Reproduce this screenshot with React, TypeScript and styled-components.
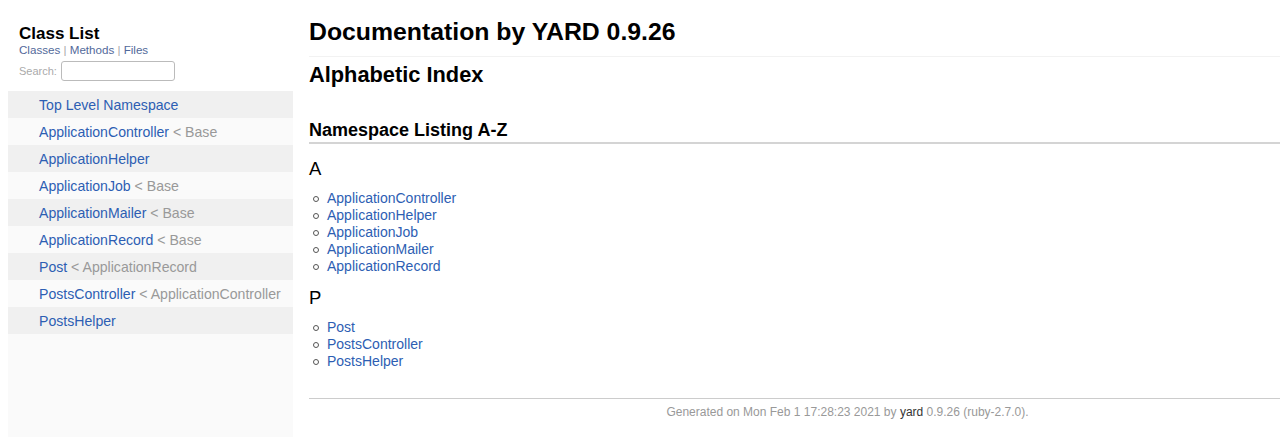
import styled, { createGlobalStyle } from "styled-components";

const Global = createGlobalStyle`
    html, body {
        margin: 0;
        padding: 0;
        background: #fff;
        font-family: "Liberation Sans", Arial, sans-serif;
        overflow: hidden;
    }
`;

const Page = styled.div`
    display: flex;
    height: 437px;
    padding-left: 8px;
`;

const Sidebar = styled.nav`
    width: 285px;
    flex-shrink: 0;
    background: #fafafa;
    display: flex;
    flex-direction: column;
`;

const SideHeader = styled.div`
    background: #fff;
    height: 91px;
    padding: 25px 0 0 11px;
    box-sizing: border-box;
`;

const SideTitle = styled.h1`
    margin: 0;
    font-size: 17px;
    font-weight: bold;
    color: #000;
    line-height: 18px;
`;

const SideNav = styled.div`
    font-size: 11.6px;
    color: #aaa;
    line-height: 13px;
    a {
        color: #52699a;
        text-decoration: none;
    }
`;

const SearchRow = styled.label`
    display: flex;
    align-items: center;
    gap: 4px;
    margin-top: 5px;
    font-size: 11px;
    color: #aaa;
`;

const SearchInput = styled.input`
    width: 114px;
    height: 20px;
    box-sizing: border-box;
    border: 1px solid #bbb;
    border-radius: 3px;
    background: #fff;
    outline: none;
`;

const ClassList = styled.ul`
    list-style: none;
    margin: 0;
    padding: 0;
`;

const ClassRow = styled.li<{ $odd: boolean }>`
    height: 27px;
    display: flex;
    align-items: center;
    padding-left: 31px;
    font-size: 14.1px;
    background: ${(p) => (p.$odd ? "#f0f0f0" : "#fafafa")};
    color: #999;
    white-space: nowrap;
`;

const Link = styled.a`
    color: #2d5eb3;
    text-decoration: none;
`;

const Main = styled.main`
    flex: 1;
    padding: 17px 0 0 16px;
    min-width: 0;
`;

const Title = styled.h1`
    margin: 0;
    font-size: 24.8px;
    line-height: 29px;
    font-weight: bold;
    color: #000;
    padding-bottom: 10px;
    border-bottom: 1px solid #f2f2f2;
`;

const SubTitle = styled.h2`
    margin: 5px 0 0;
    font-size: 21.8px;
    line-height: 26px;
    font-weight: bold;
    color: #000;
`;

const SectionTitle = styled.h2`
    margin: 32px 0 13px;
    font-size: 18px;
    line-height: 20px;
    font-weight: bold;
    color: #000;
    padding-bottom: 2px;
    border-bottom: 2px solid #d4d4d4;
`;

const Letter = styled.h3`
    margin: 11px 0 0;
    font-size: 18.5px;
    line-height: 24px;
    font-weight: normal;
    color: #000;
`;

const NameList = styled.ul`
    margin: 9px 0 0;
    padding: 0 0 0 18px;
    list-style: none;
    font-size: 14px;
    line-height: 17px;
`;

const NameItem = styled.li`
    position: relative;
    &::before {
        content: "";
        position: absolute;
        left: -14px;
        top: 6px;
        width: 4px;
        height: 4px;
        border: 1px solid #555;
        border-radius: 50%;
    }
`;

const Footer = styled.footer`
    margin-top: 28px;
    border-top: 1px solid #ccc;
    padding: 6px 0 0 106px;
    text-align: center;
    font-size: 12px;
    color: #999;
    a {
        color: #333;
        text-decoration: none;
    }
`;

const classes: [string, string | null][] = [
    ["Top Level Namespace", null],
    ["ApplicationController", "Base"],
    ["ApplicationHelper", null],
    ["ApplicationJob", "Base"],
    ["ApplicationMailer", "Base"],
    ["ApplicationRecord", "Base"],
    ["Post", "ApplicationRecord"],
    ["PostsController", "ApplicationController"],
    ["PostsHelper", null],
];

const groups: [string, string[]][] = [
    ["A", ["ApplicationController", "ApplicationHelper", "ApplicationJob", "ApplicationMailer", "ApplicationRecord"]],
    ["P", ["Post", "PostsController", "PostsHelper"]],
];

export default function App() {
    return (
        <>
            <Global />
            <Page>
                <Sidebar>
                    <SideHeader>
                        <SideTitle>Class List</SideTitle>
                        <SideNav>
                            <a href="#">Classes</a> | <a href="#">Methods</a> | <a href="#">Files</a>
                        </SideNav>
                        <SearchRow>
                            Search: <SearchInput type="text" />
                        </SearchRow>
                    </SideHeader>
                    <ClassList>
                        {classes.map(([name, parent], i) => (
                            <ClassRow key={name} $odd={i % 2 === 0}>
                                <Link href="#">{name}</Link>
                                {parent && <>&nbsp;&lt; {parent}</>}
                            </ClassRow>
                        ))}
                    </ClassList>
                </Sidebar>
                <Main>
                    <Title>Documentation by YARD 0.9.26</Title>
                    <SubTitle>Alphabetic Index</SubTitle>
                    <SectionTitle>Namespace Listing A-Z</SectionTitle>
                    {groups.map(([letter, names]) => (
                        <div key={letter}>
                            <Letter>{letter}</Letter>
                            <NameList>
                                {names.map((n) => (
                                    <NameItem key={n}>
                                        <Link href="#">{n}</Link>
                                    </NameItem>
                                ))}
                            </NameList>
                        </div>
                    ))}
                    <Footer>
                        Generated on Mon Feb 1 17:28:23 2021 by <a href="#">yard</a> 0.9.26 (ruby-2.7.0).
                    </Footer>
                </Main>
            </Page>
        </>
    );
}
